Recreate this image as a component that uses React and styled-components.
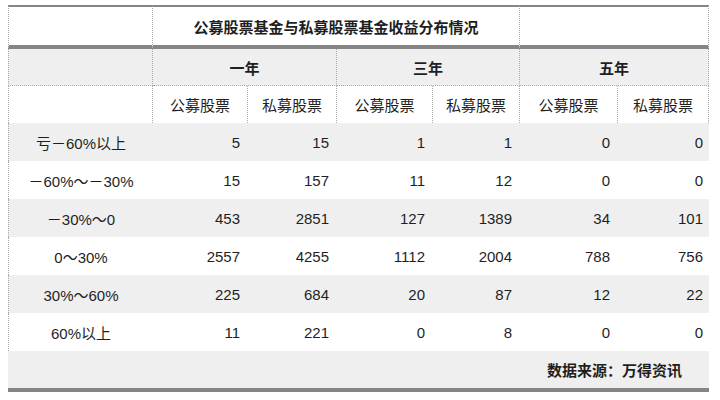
import React from 'react';
import styled, { createGlobalStyle } from 'styled-components';

const GlobalStyle = createGlobalStyle`
    body {
        margin: 0;
        background: #ffffff;
        font-family: "Liberation Sans", "Noto Sans CJK SC", sans-serif;
        color: #1f1f1f;
    }
`;

const Page = styled.div`
    padding: 5px 0 0 8px;
`;

const Table = styled.table`
    width: 701px;
    table-layout: fixed;
    border-collapse: separate;
    border-spacing: 0;
    font-size: 15px;
`;

const Row = styled.tr`
    background: ${props => (props.$shade ? '#efefef' : '#ffffff')};
`;

const dotted = '1px dotted #a9a9a9';
const heavy = '#858585';

const TitleCell = styled.td`
    box-sizing: border-box;
    height: 44px;
    padding: 0;
    border-top: 2px solid ${heavy};
    border-bottom: 4px solid ${heavy};
    border-right: ${dotted};
    border-left: ${props => (props.$first ? dotted : 'none')};
    text-align: center;
    font-weight: bold;
`;

const GroupCell = styled.td`
    box-sizing: border-box;
    height: 37px;
    padding: 0;
    border-bottom: ${dotted};
    border-right: ${dotted};
    border-left: ${props => (props.$first ? dotted : 'none')};
    text-align: center;
    font-weight: bold;
`;

const SubCell = styled.td`
    box-sizing: border-box;
    height: 37px;
    padding: 0;
    border-right: ${dotted};
    border-left: ${props => (props.$first ? dotted : 'none')};
    text-align: center;
`;

const LabelCell = styled.td`
    box-sizing: border-box;
    height: 38px;
    padding: 0;
    border-left: ${dotted};
    text-align: center;
`;

const NumCell = styled.td`
    box-sizing: border-box;
    height: 38px;
    padding: 0 ${props => props.$pad || 8}px 0 0;
    text-align: right;
`;

const SourceCell = styled.td`
    box-sizing: border-box;
    height: 41px;
    padding: 0 27px 0 0;
    border-bottom: 4px solid ${heavy};
    text-align: right;
    font-weight: bold;
`;

const widths = [145, 95, 89, 96, 87, 98, 91];

const rows = [
    ['亏－60%以上', 5, 15, 1, 1, 0, 0],
    ['－60%～－30%', 15, 157, 11, 12, 0, 0],
    ['－30%～0', 453, 2851, 127, 1389, 34, 101],
    ['0～30%', 2557, 4255, 1112, 2004, 788, 756],
    ['30%～60%', 225, 684, 20, 87, 12, 22],
    ['60%以上', 11, 221, 0, 8, 0, 0],
];

export default function App() {
    return (
        <Page>
            <GlobalStyle />
            <Table>
                <colgroup>
                    {widths.map((w, i) => <col key={i} style={{ width: w }} />)}
                </colgroup>
                <tbody>
                    <Row>
                        <TitleCell $first />
                        <TitleCell colSpan={4}>公募股票基金与私募股票基金收益分布情况</TitleCell>
                        <TitleCell colSpan={2} />
                    </Row>
                    <Row $shade>
                        <GroupCell $first />
                        <GroupCell colSpan={2}>一年</GroupCell>
                        <GroupCell colSpan={2}>三年</GroupCell>
                        <GroupCell colSpan={2}>五年</GroupCell>
                    </Row>
                    <Row>
                        <SubCell $first />
                        <SubCell>公募股票</SubCell>
                        <SubCell>私募股票</SubCell>
                        <SubCell>公募股票</SubCell>
                        <SubCell>私募股票</SubCell>
                        <SubCell>公募股票</SubCell>
                        <SubCell>私募股票</SubCell>
                    </Row>
                    {rows.map((r, i) => (
                        <Row key={r[0]} $shade={i % 2 === 0}>
                            <LabelCell>{r[0]}</LabelCell>
                            {r.slice(1).map((v, j) => (
                                <NumCell key={j} $pad={j === 5 ? 6 : 8}>{v}</NumCell>
                            ))}
                        </Row>
                    ))}
                    <Row $shade>
                        <SourceCell colSpan={7}>数据来源：万得资讯</SourceCell>
                    </Row>
                </tbody>
            </Table>
        </Page>
    );
}
